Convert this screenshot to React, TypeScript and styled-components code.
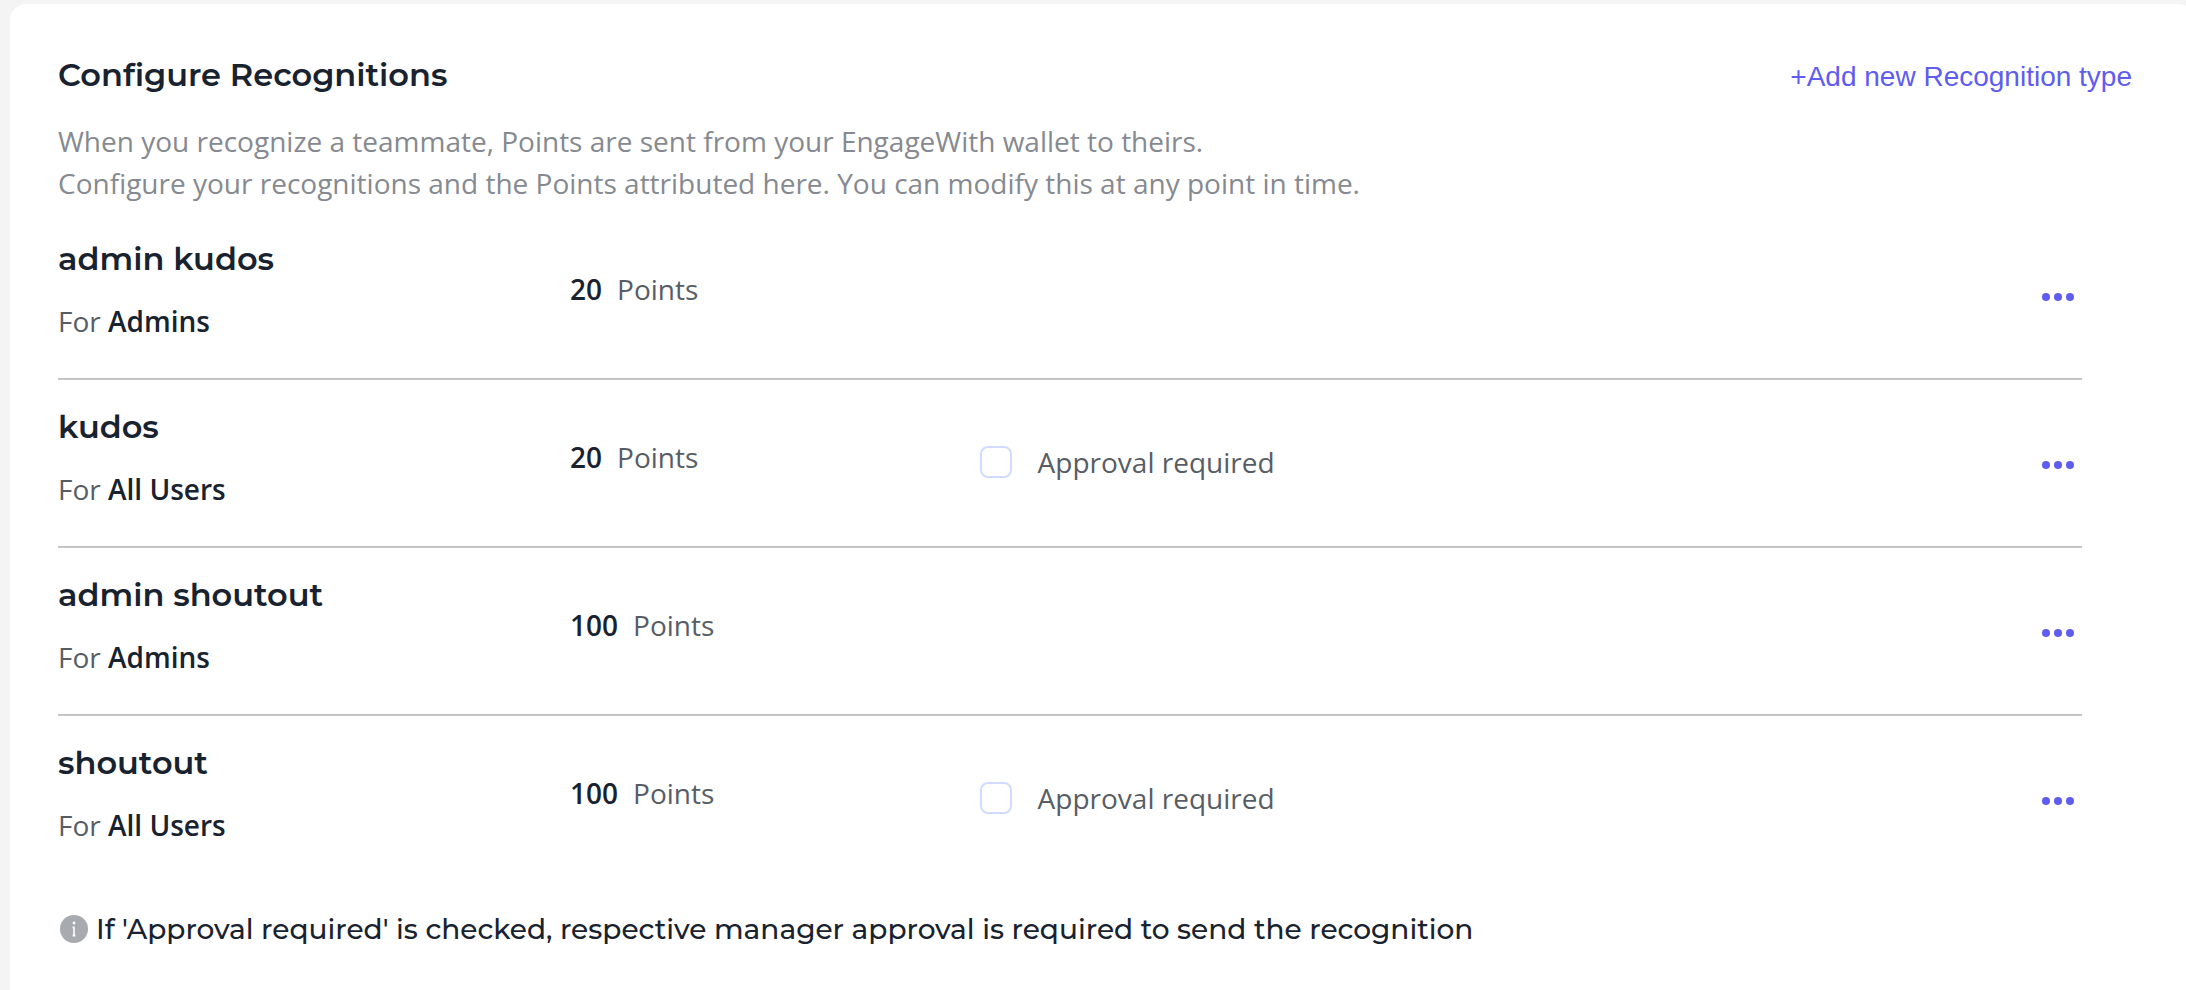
import React from "react";
import styled, { createGlobalStyle } from "styled-components";

const GlobalStyle = createGlobalStyle`
  *, *::before, *::after { box-sizing: border-box; }
  body {
    margin: 0;
    background: #f4f4f4;
    color: #19222f;
    font-family: "Open Sans", "Noto Sans", sans-serif;
    font-size: 28px;
    line-height: 42px;
  }
`;

const Page = styled.div`
  min-height: 100vh;
  padding: 4px 0 0 10px;
  display: flex;
  overflow: hidden;
`;

const Card = styled.main`
  flex: 1;
  margin-right: -8px;
  padding: 48px 62px 40px 48px;
  background: #ffffff;
  border-radius: 16px 16px 0 0;
`;

const Header = styled.header`
  display: flex;
  align-items: baseline;
  justify-content: space-between;
  gap: 24px;
`;

const Title = styled.h1`
  margin: 0;
  font-family: Montserrat, "Noto Sans", sans-serif;
  font-size: 32px;
  line-height: 46px;
  font-weight: 600;
`;

const AddButton = styled.button`
  padding: 0;
  border: 0;
  background: none;
  color: #605cf0;
  font-family: "Liberation Sans", Arial, sans-serif;
  font-size: 28px;
  line-height: 36px;
  cursor: pointer;
`;

const Description = styled.p`
  margin: 22px 0 8px;
  color: #868a90;
`;

const List = styled.ul`
  list-style: none;
  margin: 0 50px 0 0;
  padding: 0;
`;

const Row = styled.li`
  display: grid;
  grid-template-columns: 5fr 4fr 11fr;
  align-items: center;
  margin-right: -24px;
  padding: 24px 0 36px;
`;

const Divider = styled.li`
  height: 2px;
  background: #c4c4c4;
`;

const Name = styled.h2`
  margin: 0 0 18px;
  font-family: Montserrat, "Noto Sans", sans-serif;
  font-size: 32px;
  line-height: 46px;
  font-weight: 600;
`;

const Muted = styled.span`
  color: #585d65;
`;

const Strong = styled.strong`
  font-weight: 600;
`;

const Points = styled.div`
  display: flex;
  gap: 15px;
`;

const Options = styled.div`
  display: flex;
  align-items: center;
  justify-content: space-between;
  padding: 10px 32px 0 0;
`;

const ApprovalLabel = styled.label`
  display: flex;
  align-items: center;
  gap: 26px;
  color: #585d65;
`;

const Checkbox = styled.input`
  appearance: none;
  width: 32px;
  height: 32px;
  margin: 0;
  border: 2px solid #d0dbff;
  border-radius: 8px;
  background: #ffffff;
  &:checked { background: #605cf0; }
`;

const MenuButton = styled.button`
  display: flex;
  margin: 6px 0 0 auto;
  padding: 12px 0;
  border: 0;
  background: none;
  color: #605cf0;
  cursor: pointer;
`;

const Note = styled.p`
  display: flex;
  align-items: center;
  gap: 8px;
  margin: 26px 0 0;
  padding-left: 2px;
  font-family: Montserrat, "Noto Sans", sans-serif;
  font-size: 28px;
  font-weight: 500;
`;

const items = [
  { name: "admin kudos", audience: "Admins", points: 20, approval: false },
  { name: "kudos", audience: "All Users", points: 20, approval: true },
  { name: "admin shoutout", audience: "Admins", points: 100, approval: false },
  { name: "shoutout", audience: "All Users", points: 100, approval: true },
];

const Dots = () => (
  <svg width="32" height="8" viewBox="0 0 32 8" fill="currentColor" aria-hidden="true">
    <circle cx="4" cy="4" r="4" />
    <circle cx="16" cy="4" r="4" />
    <circle cx="28" cy="4" r="4" />
  </svg>
);

const InfoIcon = () => (
  <svg width="28" height="28" viewBox="0 0 28 28" aria-hidden="true">
    <circle cx="14" cy="14" r="14" fill="#a7abb0" />
    <circle cx="14" cy="8" r="1.4" fill="#fff" />
    <path d="M12.6 12.4H14V20.6M12.6 20.6H15.4" fill="none" stroke="#fff" strokeWidth="1.6" />
  </svg>
);

export default function App() {
  return (
    <Page>
      <GlobalStyle />
      <Card>
        <Header>
          <Title>Configure Recognitions</Title>
          <AddButton type="button">+Add new Recognition type</AddButton>
        </Header>
        <Description>
          When you recognize a teammate, Points are sent from your EngageWith wallet to theirs.
          <br />
          Configure your recognitions and the Points attributed here. You can modify this at any point in time.
        </Description>
        <List>
          {items.map((item, i) => (
            <React.Fragment key={item.name}>
              {i > 0 && <Divider role="separator" />}
              <Row>
                <div>
                  <Name>{item.name}</Name>
                  <Muted>For </Muted>
                  <Strong>{item.audience}</Strong>
                </div>
                <Points>
                  <Strong>{item.points}</Strong>
                  <Muted>Points</Muted>
                </Points>
                <Options>
                  {item.approval && (
                    <ApprovalLabel>
                      <Checkbox type="checkbox" />
                      Approval required
                    </ApprovalLabel>
                  )}
                  <MenuButton type="button" aria-label={`Options for ${item.name}`}>
                    <Dots />
                  </MenuButton>
                </Options>
              </Row>
            </React.Fragment>
          ))}
        </List>
        <Note>
          <InfoIcon />
          If 'Approval required' is checked, respective manager approval is required to send the recognition
        </Note>
      </Card>
    </Page>
  );
}
